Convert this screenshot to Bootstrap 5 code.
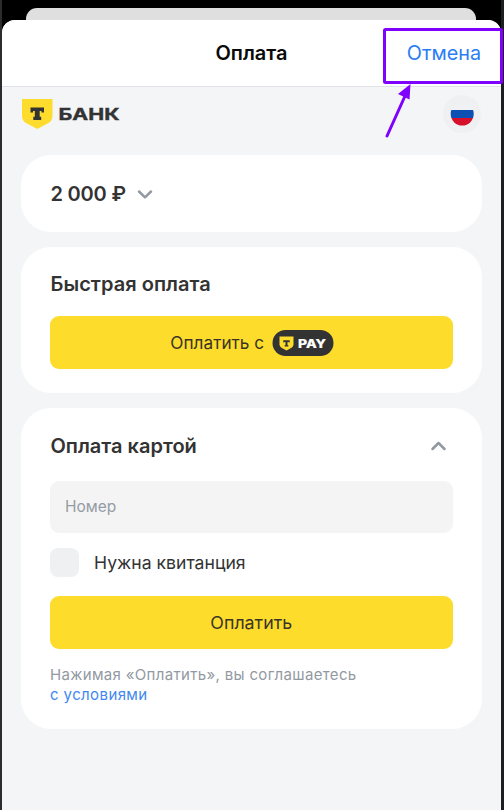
<!DOCTYPE html>
<html lang="ru">
<head>
<meta charset="utf-8">
<meta name="viewport" content="width=device-width, initial-scale=1">
<title>Оплата</title>
<link href="https://cdn.jsdelivr.net/npm/bootstrap@5.3.0/dist/css/bootstrap.min.css" rel="stylesheet">
<style>
  body { font-family: Inter, "Liberation Sans", sans-serif; color: #333; background: #000; height: 810px; }
  svg { display: block; flex-shrink: 0; }
  .screen { width: 504px; height: 810px; padding: 8px 3px 0 2px; background: linear-gradient(90deg, #2b2c30 2px, #000 2px, #000 501px, #1c1e21 501px); }
  .back-sheet { height: 12px; margin: 0 25px 0 24px; background: #dfdfdf; border-radius: 11px 11px 0 0; }
  .sheet { height: 790px; background: #f4f5f7; border-radius: 13px 13px 0 0; }
  .sheet-head { height: 67px; background: #fff; border-bottom: 1px solid #e1e2e5; padding: 0 20px; grid-template-columns: 1fr auto 1fr; }
  .sheet-title { font-size: 20px; font-weight: 600; color: #0a0a0a; line-height: 30px; }
  .cancel { font-size: 19.8px; color: #2b7df5; line-height: 30px; }
  .brand-row { height: 54px; padding: 0 20px; }
  .flag-btn { width: 38px; height: 38px; background: #eef0f2; border: 0; }
  .panels { padding: 14px 19.5px 0 19px; gap: 15px; }
  .panel { background: #fff; border-radius: 30px; padding: 0 29px; }
  .h-amount { height: 77px; }
  .h-fast { height: 146px; padding-top: 22px; }
  .h-form { height: 321px; }
  .panel-title { font-size: 20px; font-weight: 600; line-height: 30px; margin: 0; color: #333; text-indent: .5px; }
  .amount { letter-spacing: -.2px; }
  .h-fast .panel-title { margin-bottom: 17px; letter-spacing: .03px; }
  .pay-btn, .pay-btn:hover { height: 53px; background: #fddc2c; border: 0; border-radius: 9px; font-size: 17.8px; color: #3a3426; }
  .pay-label { padding-top: 1px; }
  .pay-fast .pay-label { font-size: 17.2px; padding-left: 2px; }
  .form-head { height: 73px; padding-top: 2px; }
  .number-input { height: 52px; background: #f4f4f5; border: 0; border-radius: 9px; padding: 0 15px 1px; font-size: 15.5px; }
  .number-input::placeholder { color: #959ba4; }
  .check-row { height: 63px; gap: 15px; padding-bottom: 4px; }
  .check-box.form-check-input[type=checkbox] { width: 29px; height: 29px; background-color: #eef0f2; border: 0; border-radius: 8px; margin: 0; }
  .check-label { font-size: 17.6px; line-height: 28px; }
  .terms { font-size: 15px; line-height: 20px; color: #9299a2; padding-top: 16px; letter-spacing: .33px; }
  .terms a { color: #4287ef; letter-spacing: .4px; }
  .marker { left: 380px; top: 24px; z-index: 2; pointer-events: none; }
</style>
</head>
<body class="m-0 overflow-hidden">
<div class="screen position-relative">
  <div class="back-sheet"></div>
  <main class="sheet overflow-hidden">
    <header class="sheet-head d-grid align-items-center">
      <span></span>
      <span class="sheet-title">Оплата</span>
      <a class="cancel text-decoration-none text-end" href="#">Отмена</a>
    </header>
    <div class="brand-row d-flex align-items-center justify-content-between">
      <svg width="100" height="32" viewBox="0 0 100 32" role="img" aria-label="Т Банк">
        <path d="M0 1H30.500V18Q30.500 22.500 26.500 25L15.250 31L4 25Q0 22.500 0 18Z" fill="#fddc2d"/>
        <path d="M8.500 9.500H22V14.500H19.500V13H17.700V18.800H19.200V22H11.300V18.800H12.800V13H11V14.500H8.500Z" fill="#333"/>
        <text x="36.500" y="22" font-size="16.500" font-weight="700" fill="#333" stroke="#333" stroke-width=".4" textLength="61" lengthAdjust="spacingAndGlyphs">БАНК</text>
      </svg>
      <button class="flag-btn btn rounded-circle p-0 d-flex align-items-center justify-content-center" aria-label="Русский">
        <svg width="24" height="24" viewBox="0 0 24 24">
          <clipPath id="disc"><circle cx="12.200" cy="12" r="11.500"/></clipPath>
          <g clip-path="url(#disc)"><path fill="#f0f1f3" d="M0 0H24V8H0Z"/><path fill="#0c50b4" d="M0 8H24V16H0Z"/><path fill="#d60f2b" d="M0 16H24V24H0Z"/></g>
        </svg>
      </button>
    </div>
    <div class="panels d-flex flex-column">
      <section class="panel h-amount d-flex align-items-center">
        <span class="panel-title amount">2 000 ₽</span>
        <svg class="ms-2" width="22" height="16" viewBox="0 0 22 16"><path d="M5 5.500L11 11.300L17 5.500" fill="none" stroke="#9299a2" stroke-width="2.500" stroke-linecap="round" stroke-linejoin="round"/></svg>
      </section>
      <section class="panel h-fast">
        <h2 class="panel-title">Быстрая оплата</h2>
        <button class="pay-btn pay-fast btn w-100 d-flex align-items-center justify-content-center gap-2 p-0">
          <span class="pay-label">Оплатить с</span>
          <svg width="62" height="26" viewBox="0 0 62 26" role="img" aria-label="T Pay">
            <rect x=".5" width="61" height="26" rx="13" fill="#333"/>
            <path d="M7.500 6.500H21.500V14.500Q21.500 16.500 19.500 17.700L14.500 20.500L9.500 17.700Q7.500 16.500 7.500 14.500Z" fill="#fddc2d"/>
            <path d="M11.300 10.200H17.700V12.500H16.700V11.900H15.500V15.300H16.400V16.500H12.600V15.300H13.500V11.900H12.300V12.500H11.300Z" fill="#333"/>
            <text x="26" y="17.500" font-size="11.500" font-weight="800" fill="#fff" stroke="#fff" stroke-width=".2" textLength="28" lengthAdjust="spacingAndGlyphs">PAY</text>
          </svg>
        </button>
      </section>
      <section class="panel h-form">
        <div class="form-head d-flex align-items-center justify-content-between">
          <h2 class="panel-title">Оплата картой</h2>
          <svg width="30" height="16" viewBox="0 0 30 16"><path d="M9.500 11L15.500 5L21.500 11" fill="none" stroke="#9299a2" stroke-width="2.500" stroke-linecap="round" stroke-linejoin="round"/></svg>
        </div>
        <input class="number-input form-control shadow-none" placeholder="Номер" aria-label="Номер">
        <div class="check-row d-flex align-items-center">
          <input class="check-box form-check-input" type="checkbox" id="receipt">
          <label class="check-label" for="receipt">Нужна квитанция</label>
        </div>
        <button class="pay-btn btn w-100 d-flex align-items-center justify-content-center p-0"><span class="pay-label">Оплатить</span></button>
        <p class="terms mb-0">Нажимая «Оплатить», вы соглашаетесь<br><a class="text-decoration-none" href="#">с условиями</a></p>
      </section>
    </div>
  </main>
  <svg class="marker position-absolute" width="124" height="116" viewBox="0 0 124 116" fill="none" stroke="#8000ff">
    <rect x="4.500" y="5.500" width="117" height="53" rx="1" stroke-width="3"/>
    <path d="M7 112L25 72" stroke-width="3" stroke-linecap="round"/>
    <path d="M30.500 60L29.500 75.500L18 70Z" fill="#8000ff" stroke="none"/>
  </svg>
</div>
<script src="https://cdn.jsdelivr.net/npm/bootstrap@5.3.0/dist/js/bootstrap.bundle.min.js"></script>
</body>
</html>
